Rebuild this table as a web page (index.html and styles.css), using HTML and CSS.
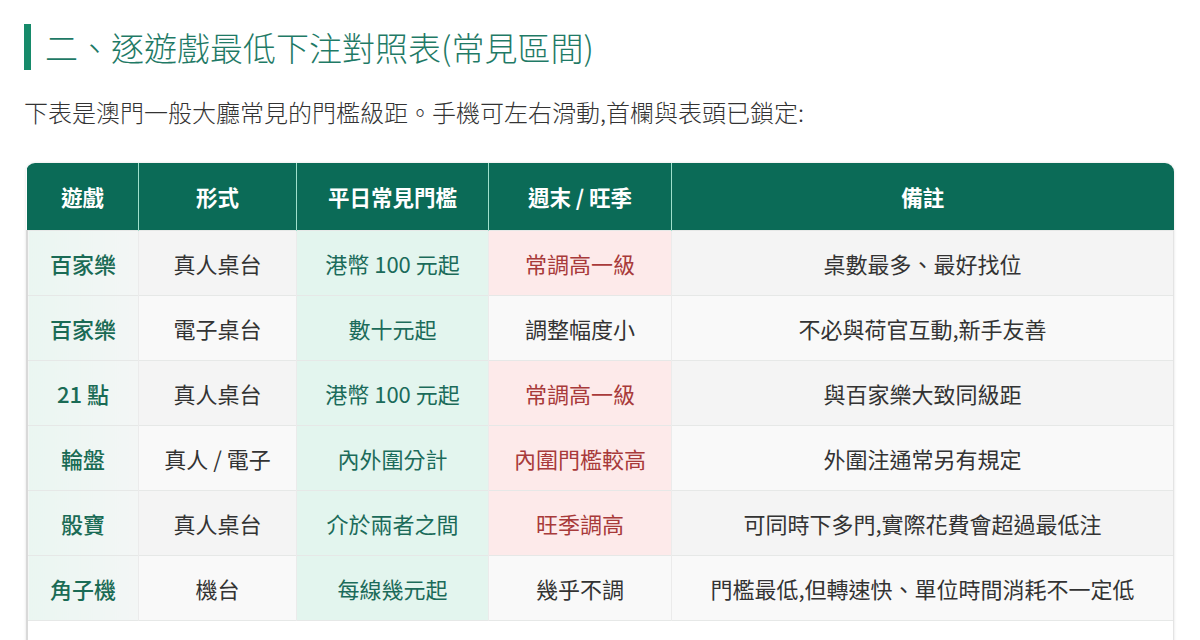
FILE: index.html
```html
<!DOCTYPE html>
<html lang="zh-Hant">
<head>
<meta charset="utf-8">
<title>逐遊戲最低下注對照表</title>
<link rel="stylesheet" href="styles.css">
</head>
<body>
<div class="page">
  <h2 class="section-title">二、逐遊戲最低下注對照表(常見區間)</h2>
  <p class="intro">下表是澳門一般大廳常見的門檻級距。手機可左右滑動,首欄與表頭已鎖定:</p>
  <div class="table-wrap">
    <table class="bet-table">
      <thead>
        <tr>
          <th class="c-game">遊戲</th>
          <th class="c-form">形式</th>
          <th class="c-week">平日常見門檻</th>
          <th class="c-peak">週末 / 旺季</th>
          <th class="c-note">備註</th>
        </tr>
      </thead>
      <tbody>
        <tr class="odd">
          <td class="game">百家樂</td><td>真人桌台</td><td class="week">港幣 100 元起</td><td class="peak up">常調高一級</td><td>桌數最多、最好找位</td>
        </tr>
        <tr class="even">
          <td class="game">百家樂</td><td>電子桌台</td><td class="week">數十元起</td><td class="peak">調整幅度小</td><td>不必與荷官互動,新手友善</td>
        </tr>
        <tr class="odd">
          <td class="game">21 點</td><td>真人桌台</td><td class="week">港幣 100 元起</td><td class="peak up">常調高一級</td><td>與百家樂大致同級距</td>
        </tr>
        <tr class="even">
          <td class="game">輪盤</td><td>真人 / 電子</td><td class="week">內外圍分計</td><td class="peak up">內圍門檻較高</td><td>外圍注通常另有規定</td>
        </tr>
        <tr class="odd">
          <td class="game">骰寶</td><td>真人桌台</td><td class="week">介於兩者之間</td><td class="peak up">旺季調高</td><td>可同時下多門,實際花費會超過最低注</td>
        </tr>
        <tr class="even">
          <td class="game">角子機</td><td>機台</td><td class="week">每線幾元起</td><td class="peak">幾乎不調</td><td>門檻最低,但轉速快、單位時間消耗不一定低</td>
        </tr>
        <tr class="blank">
          <td></td><td></td><td></td><td></td><td></td>
        </tr>
      </tbody>
    </table>
  </div>
</div>
</body>
</html>
```

FILE: styles.css
```css
html, body {
  margin: 0;
  padding: 0;
  background: #ffffff;
}

body {
  font-family: "Noto Sans CJK TC", "Noto Sans", sans-serif;
  color: #333333;
}

.page {
  padding: 24px 26px 0 24px;
}

.section-title {
  margin: 0;
  border-left: 7px solid #168a6a;
  padding-left: 14px;
  font-size: 33px;
  font-weight: 300;
  line-height: 46px;
  color: #1f7a66;
}

.intro {
  margin: 25px 0 0 0;
  font-size: 24px;
  font-weight: 300;
  line-height: 34px;
  color: #333333;
}

.table-wrap {
  margin: 34px 0 0 2px;
  border-radius: 9px 9px 0 0;
  overflow: hidden;
  box-shadow: 0 0 3px rgba(0, 0, 0, 0.12);
}

.bet-table {
  width: 100%;
  border-collapse: collapse;
  table-layout: fixed;
  font-size: 22px;
}

.c-game { width: 111px; }
.c-form { width: 157px; }
.c-week { width: 191px; }
.c-peak { width: 182px; }

.bet-table th {
  height: 67px;
  padding: 0;
  background: #0b6b57;
  color: #ffffff;
  font-weight: 700;
  font-size: 21.5px;
  text-align: center;
  border-left: 1px solid #9fe0cc;
}

.bet-table th:first-child {
  border-left: none;
}

.bet-table td {
  height: 64px;
  padding: 0;
  text-align: center;
  color: #333333;
  font-weight: 400;
  border-top: 1px solid #e6e8e7;
  border-left: 1px solid #ebebeb;
}

.bet-table td:first-child {
  border-left: 2px solid #d9d9d9;
}

.bet-table td:last-child {
  border-right: 1px solid #e4e4e4;
}

.odd td { background: #f4f4f4; }
.even td { background: #f9f9f9; }

.blank td {
  background: #ffffff;
  border-left-color: #ffffff;
}

.odd td.game,
.even td.game {
  background: linear-gradient(90deg, #eaf6f1 0%, #f3f6f5 100%);
  color: #1a6b55;
  font-weight: 500;
}

.odd td.week,
.even td.week {
  background: #e3f5ee;
  color: #1b6b5a;
}

td.peak.up {
  background: #fdeaea;
  color: #a83a3a;
}
```
